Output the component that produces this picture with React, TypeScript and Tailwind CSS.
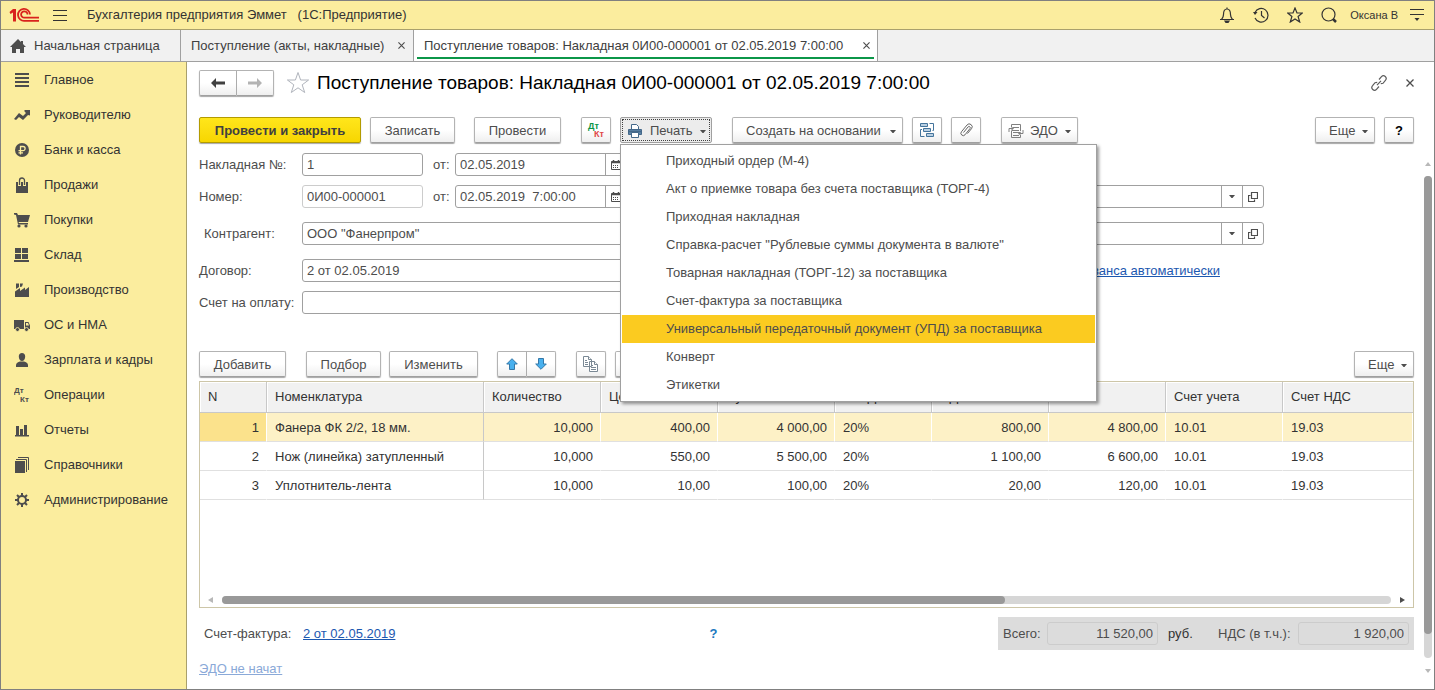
import type { ReactNode } from 'react';
import clsx from 'clsx';

interface IconProps {
    className?: string;
}

const sections: { name: string; icon: ReactNode }[] = [
    { name: 'Главное', icon: <path d="M1 1h14v2H1zM1 5h14v2H1zM1 9h14v2H1zM1 13h14v2H1z" /> },
    {
        name: 'Руководителю',
        icon: <path d="M0 12l5-6 4 3 3-3-1.500-1.500V3H16v5.500L14 8l-5 5-4-3-3 3z" />,
    },
    {
        name: 'Банк и касса',
        icon: (
            <>
                <circle cx="8" cy="8" r="7" />
                <path
                    d="M6.500 12.500V4.500H9a2 2 0 0 1 0 4.200H4.500M4.500 10.800H9"
                    fill="none"
                    stroke="#fbed9e"
                    strokeWidth="1.300"
                />
            </>
        ),
    },
    {
        name: 'Продажи',
        icon: (
            <>
                <path d="M2 5h12v11H2z" />
                <path d="M5.500 9V3.500a2.500 2.500 0 0 1 5 0V9" fill="none" stroke="#fbed9e" strokeWidth="3" />
                <path d="M5.500 8V3.500a2.500 2.500 0 0 1 5 0V8" fill="none" stroke="#4d4d4d" strokeWidth="1.300" />
            </>
        ),
    },
    {
        name: 'Покупки',
        icon: (
            <>
                <path d="M0 1h3l1 2h12l-2 7H4.500L5 11h9v1.500H4L2 3 0 2.500z" />
                <circle cx="5" cy="14" r="1.600" />
                <circle cx="12" cy="14" r="1.600" />
            </>
        ),
    },
    {
        name: 'Склад',
        icon: <path d="M1 1h6v5H1zM8 1h6v5H8zM1 7h6v5H1zM8 7h6v5H8zM0 13h15v2H0z" />,
    },
    {
        name: 'Производство',
        icon: <path d="M1 15V9.500L6 6v3l5-3.500V8l4-3v10zM2 1.500h3V5L2 7zM6 1.500h3l-1 3-2 .5z" />,
    },
    {
        name: 'ОС и НМА',
        icon: (
            <>
                <path d="M0 3h10v9H0zM11 5h3.500L16 8.500V12h-5z" />
                <path d="M12 6h2l1 2.500h-3z" fill="#fbed9e" />
                <circle cx="3.500" cy="12.500" r="2" stroke="#fbed9e" strokeWidth=".8" />
                <circle cx="12.500" cy="12.500" r="2" stroke="#fbed9e" strokeWidth=".8" />
            </>
        ),
    },
    {
        name: 'Зарплата и кадры',
        icon: (
            <path d="M8 1c2 0 3.200 1.300 3.200 3.500C11.200 7 9.800 9 8 9S4.800 7 4.800 4.500C4.800 2.300 6 1 8 1zM2 15v-2c0-2 2-3 4-3.500h4c2 .5 4 1.500 4 3.500v2z" />
        ),
    },
    {
        name: 'Операции',
        icon: (
            <>
                <text x="0" y="6" fontSize="8" fontWeight="bold">
                    Дт
                </text>
                <text x="6" y="15" fontSize="8" fontWeight="bold">
                    Кт
                </text>
            </>
        ),
    },
    { name: 'Отчеты', icon: <path d="M2 4h3v9h1V7h3v6h1V3h3v10h2v1.500H1V13h1z" /> },
    {
        name: 'Справочники',
        icon: (
            <>
                <path d="M1 4h10v12H1z" />
                <path d="M2 2.500h10.500V15M4 .5h10.500V13" fill="none" stroke="#4d4d4d" />
            </>
        ),
    },
    {
        name: 'Администрирование',
        icon: (
            <>
                <circle cx="8" cy="8" r="4" fill="none" stroke="#4d4d4d" strokeWidth="2" />
                <path
                    d="M8 1v3M8 12v3M1 8h3M12 8h3M3 3l2 2M11 11l2 2M13 3l-2 2M5 11l-2 2"
                    stroke="#4d4d4d"
                    strokeWidth="2"
                />
            </>
        ),
    },
];

const printForms = [
    'Приходный ордер (М-4)',
    'Акт о приемке товара без счета поставщика (ТОРГ-4)',
    'Приходная накладная',
    'Справка-расчет "Рублевые суммы документа в валюте"',
    'Товарная накладная (ТОРГ-12) за поставщика',
    'Счет-фактура за поставщика',
    'Универсальный передаточный документ (УПД) за поставщика',
    'Конверт',
    'Этикетки',
];

const columns = [
    { title: 'N', width: 'w-[67px]', numeric: true },
    { title: 'Номенклатура', width: 'w-[217px]', numeric: false },
    { title: 'Количество', width: 'w-[117px]', numeric: true },
    { title: 'Цена', width: 'w-[117px]', numeric: true },
    { title: 'Сумма', width: 'w-[117px]', numeric: true },
    { title: '% НДС', width: 'w-[97px]', numeric: false },
    { title: 'НДС', width: 'w-[117px]', numeric: true },
    { title: 'Всего', width: 'w-[117px]', numeric: true },
    { title: 'Счет учета', width: 'w-[117px]', numeric: false },
    { title: 'Счет НДС', width: '', numeric: false },
];

const goods = [
    ['1', 'Фанера ФК 2/2, 18 мм.', '10,000', '400,00', '4 000,00', '20%', '800,00', '4 800,00', '10.01', '19.03'],
    ['2', 'Нож (линейка) затупленный', '10,000', '550,00', '5 500,00', '20%', '1 100,00', '6 600,00', '10.01', '19.03'],
    ['3', 'Уплотнитель-лента', '10,000', '10,00', '100,00', '20%', '20,00', '120,00', '10.01', '19.03'],
];

const Caret = ({ className }: IconProps) => (
    <svg viewBox="0 0 6 3" className={clsx('h-[3px] w-1.5 shrink-0', className)} fill="#4d4d4d">
        <path d="M0 0h6L3.500 3h-1z" />
    </svg>
);

const Cross = ({ className }: IconProps) => (
    <svg viewBox="0 0 8 8" className={clsx('shrink-0', className)} stroke="#4d4d4d" strokeWidth="1.300">
        <path d="M.5.5l7 7M7.500.5l-7 7" />
    </svg>
);

const DtKt = () => (
    <svg viewBox="0 0 18 18" className="h-[18px] w-[18px]" fontSize="9" fontWeight="bold">
        <text x="1" y="8" fill="#0b9648">
            Дт
        </text>
        <text x="7" y="16" fill="#e04848">
            Кт
        </text>
    </svg>
);

const CalendarIcon = () => (
    <svg viewBox="0 0 10 10" className="h-2.5 w-2.5" fill="none" stroke="#4d4d4d">
        <path d="M.5 1.500h9v8h-9z" />
        <path d="M0 2.500h10M2.500 0v2M7.500 0v2" strokeWidth="1.500" />
        <path d="M2 5.500h6M2 7.500h6" strokeDasharray="1 1" />
    </svg>
);

const OpenIcon = () => (
    <svg viewBox="0 0 10 10" className="h-2.5 w-2.5" fill="none" stroke="#4d4d4d" strokeWidth="1.200">
        <path d="M3.500.5h6v6h-6zM2.500 3.500h-2v6h6v-2" />
    </svg>
);

interface ButtonProps {
    children: ReactNode;
    className?: string;
    label?: string;
}

const Button = ({ children, className, label }: ButtonProps) => (
    <button
        type="button"
        aria-label={label}
        className={clsx(
            'flex h-[26px] shrink-0 items-center rounded-[2px] border border-[#b3b3b3] border-b-[#a0a0a0] bg-linear-to-b from-white from-50% to-[#efefef] shadow-[0_1px_1px_rgba(0,0,0,0.35)]',
            !label && 'pt-0.5',
            className
        )}
    >
        {children}
    </button>
);

interface FieldProps {
    id: string;
    label: string;
    value: string;
    kind?: 'plain' | 'readonly' | 'date' | 'reference';
    labelClass: string;
    boxClass: string;
}

const Field = ({ id, label, value, kind = 'plain', labelClass, boxClass }: FieldProps) => (
    <>
        <label htmlFor={id} className={clsx('shrink-0', labelClass)}>
            {label}
        </label>
        <div
            className={clsx(
                'flex h-[23px] rounded-[3px] border bg-white',
                kind === 'readonly' ? 'border-[#cccccc]' : 'border-[#a0a0a0]',
                boxClass
            )}
        >
            <input
                id={id}
                defaultValue={value}
                readOnly={kind === 'readonly'}
                className="w-full min-w-0 bg-transparent px-1 outline-none"
            />
            {kind === 'date' && (
                <button
                    type="button"
                    aria-label="Выбрать дату"
                    className="flex w-[21px] shrink-0 items-center justify-center border-l border-[#a0a0a0]"
                >
                    <CalendarIcon />
                </button>
            )}
            {kind === 'reference' && (
                <>
                    <button
                        type="button"
                        aria-label="Выбрать"
                        className="flex w-[21px] shrink-0 items-center justify-center border-l border-[#a0a0a0]"
                    >
                        <Caret />
                    </button>
                    <button
                        type="button"
                        aria-label="Открыть"
                        className="flex w-[21px] shrink-0 items-center justify-center border-l border-[#a0a0a0]"
                    >
                        <OpenIcon />
                    </button>
                </>
            )}
        </div>
    </>
);

const Header = () => (
    <header className="flex h-[29px] items-center border-b border-[#a9a06c] bg-[#fbed9e] text-[#333333]">
        <svg viewBox="0 0 30 16" className="ml-2 h-4 w-[30px]" fill="none" stroke="#d9231d" strokeWidth="1.800">
            <path d="M.5 5L4 2h3v12.500H4V5.500L1.500 7z" fill="#d9231d" stroke="none" />
            <path d="M21 7.500A6 6 0 1 0 15.500 13.800H30" />
            <path d="M18.500 7.500A3.200 3.200 0 1 0 15.500 10.700H30" />
        </svg>
        <button type="button" aria-label="Меню" className="ml-3.5">
            <svg viewBox="0 0 14 11" className="h-[11px] w-3.5" stroke="#333333">
                <path d="M0 .5h14M0 5.500h14M0 10.500h14" />
            </svg>
        </button>
        <h1 className="ml-5 flex-1 whitespace-pre">Бухгалтерия предприятия Эммет   (1С:Предприятие)</h1>
        <button type="button" aria-label="Уведомления" className="flex w-[34px] justify-center">
            <svg viewBox="0 0 16 16" className="h-4 w-4" fill="none" stroke="#333333" strokeWidth="1.200">
                <path d="M8 .5v1.500M1 12.500h14M2.500 12.500c1-1.500 2-2.500 2-5C4.500 4 5.500 2 8 2s3.500 2 3.500 5.500c0 2.500 1 3.500 2 5" />
                <path d="M6 14h4l-1 1.500H7z" fill="#333333" />
            </svg>
        </button>
        <button type="button" aria-label="История" className="flex w-[34px] justify-center">
            <svg viewBox="0 0 16 16" className="h-4 w-4" fill="none" stroke="#333333" strokeWidth="1.200">
                <path d="M2 5.500A6.800 6.800 0 1 1 2 11M8.500 4v4.500l3 2.500" />
                <path d="M0 5h4.500L2 8z" fill="#333333" stroke="none" />
            </svg>
        </button>
        <button type="button" aria-label="Избранное" className="flex w-[34px] justify-center">
            <svg viewBox="0 0 16 16" className="h-4 w-4" fill="none" stroke="#333333" strokeWidth="1.200">
                <path d="M8 1l2 5h5.300l-4.200 3.500 1.600 5.500L8 12l-4.700 3 1.600-5.500L.7 6H6z" />
            </svg>
        </button>
        <button type="button" aria-label="Поиск" className="flex w-[34px] justify-center">
            <svg viewBox="0 0 16 16" className="h-4 w-4" fill="none" stroke="#333333" strokeWidth="1.200">
                <circle cx="7.500" cy="7.500" r="6.500" />
                <path d="M12 12l3 3" strokeWidth="2.500" />
            </svg>
        </button>
        <span className="ml-1 text-[11px]">Оксана В</span>
        <button type="button" aria-label="Настройки" className="mr-2.5 ml-3">
            <svg viewBox="0 0 14 14" className="h-3.5 w-3.5" stroke="#333333">
                <path d="M0 1.500h14M0 6.500h14" />
                <path d="M4.500 10h5L7 13z" fill="#333333" stroke="none" />
            </svg>
        </button>
    </header>
);

const Tabs = () => (
    <nav className="flex h-8 border-b border-[#a0a0a0] bg-[#f1f1f1] text-[#404040]">
        <a href="#home" className="flex w-[180px] items-center gap-2 border-r border-[#a0a0a0] pl-[9px]">
            <svg viewBox="0 0 16 16" className="h-4 w-4" fill="#4d4d4d">
                <path d="M8 1l3 3V3h2v3l3 3h-2v6h-4v-4H6v4H2V9H0z" />
            </svg>
            Начальная страница
        </a>
        <div className="flex w-[233px] items-center justify-between border-r border-[#a0a0a0] pr-2 pl-2.5">
            <a href="#list">Поступление (акты, накладные)</a>
            <button type="button" aria-label="Закрыть вкладку">
                <Cross className="h-[7px] w-[7px]" />
            </button>
        </div>
        <div className="flex w-[464px] flex-col border-r border-[#a0a0a0] bg-white px-[3px] pb-0.5">
            <div className="flex flex-1 items-center justify-between border-b-2 border-[#0b9648] pt-1 pr-1 pl-[7px]">
                <a href="#document">Поступление товаров: Накладная 0И00-000001 от 02.05.2019 7:00:00</a>
                <button type="button" aria-label="Закрыть вкладку">
                    <Cross className="h-[7px] w-[7px]" />
                </button>
            </div>
        </div>
    </nav>
);

const Sidebar = () => (
    <aside className="w-[186px] shrink-0 border-r border-[#a9a06c] bg-[#fbed9e] text-[#333333]">
        {sections.map((section) => (
            <a key={section.name} href="#section" className="flex h-[35px] items-center gap-3.5 pl-[13px]">
                <svg viewBox="0 0 16 16" className="h-4 w-4 shrink-0" fill="#4d4d4d">
                    {section.icon}
                </svg>
                {section.name}
            </a>
        ))}
    </aside>
);

const PrintMenu = () => (
    <ul
        role="menu"
        className="absolute top-[27px] left-0 z-10 w-[477px] border border-[#a0a0a0] bg-white px-px py-0.5 shadow-[2px_2px_3px_rgba(0,0,0,0.4)]"
    >
        {printForms.map((form) => (
            <li key={form} role="none">
                <button
                    type="button"
                    role="menuitem"
                    className={clsx(
                        'flex h-7 w-full items-center pl-11 text-left',
                        form.startsWith('Универсальный') && 'bg-[#fbcb20]'
                    )}
                >
                    {form}
                </button>
            </li>
        ))}
    </ul>
);

const CommandBar = () => (
    <div className="mt-[21px] flex items-start">
        <button
            type="button"
            className="h-[26px] w-[162px] shrink-0 rounded-[2px] border border-[#b39b00] bg-linear-to-b from-[#ffe61a] to-[#f7d600] pt-0.5 font-bold text-[#404040] shadow-[0_1px_1px_rgba(0,0,0,0.35)]"
        >
            Провести и закрыть
        </button>
        <Button className="ml-[9px] w-[85px] justify-center">Записать</Button>
        <Button className="ml-[19px] w-[87px] justify-center">Провести</Button>
        <Button className="ml-5 w-[30px] justify-center" label="Показать проводки">
            <DtKt />
        </Button>
        <div className="relative ml-[9px]">
            <button
                type="button"
                aria-haspopup="menu"
                aria-expanded="true"
                className="flex h-[26px] w-[92px] rounded-[2px] border border-[#a0a0a0] bg-[#ececec] p-px"
            >
                <span className="flex h-full w-full items-center border border-dotted border-[#404040] pt-0.5 pr-[3px] pl-[5px]">
                    <svg viewBox="0 0 14 14" className="h-3.5 w-3.5" fill="none" stroke="#44688a">
                        <path d="M3.500 5V.5h5l2 2V5" fill="#fff" />
                        <path d="M.5 5.500h13v5H.5z" fill="#5c84a8" />
                        <path d="M3.500 8.500h7v5h-7z" fill="#fff" />
                        <path d="M0 7.500h14" strokeWidth="1.500" />
                    </svg>
                    <span className="ml-2 flex-1 text-left">Печать</span>
                    <Caret />
                </span>
            </button>
            <PrintMenu />
        </div>
        <Button className="ml-5 w-[171px] justify-between pr-1.5 pl-[13px]">
            Создать на основании
            <Caret />
        </Button>
        <Button className="ml-[9px] w-[30px] justify-center" label="Структура подчиненности">
            <svg viewBox="0 0 16 16" className="h-4 w-4" fill="#b8cfe2" stroke="#44749c">
                <path d="M1.500 1.500h7v3h-7zM4.500 6.500h7v3h-7zM7.500 11.500h7v3h-7z" />
                <path d="M10.500 1.500h4v7h-1M3 7.500H1.500v7h4" fill="none" />
            </svg>
        </Button>
        <Button className="ml-[9px] w-[30px] justify-center" label="Присоединенные файлы">
            <svg viewBox="0 0 16 16" className="h-4 w-4" fill="none" stroke="#666666">
                <path d="M5.500 10.500l4.500-5.500a1.200 1.200 0 0 1 2 1.500L7 12.800A2.300 2.300 0 0 1 3.500 9.700L9 3a2.900 2.900 0 0 1 4.500 3.700L9.500 11.500" />
            </svg>
        </Button>
        <Button className="ml-5 w-[77px] pr-1.5 pl-1.5">
            <svg viewBox="0 0 16 16" className="h-4 w-4" fill="none" stroke="#808080">
                <path d="M3.500 4V1.500h9V8M3.500 8v6.500h9V12M5 4.500h6M3.500 7.500H11M5 9.500h7.500M5 12.500h6" />
                <path d="M1 9V5.500h3M15 7v3.500h-3" />
                <path d="M3.500 3.500v4l2.500-2zM12.500 8.500v4l-2.500-2z" fill="#808080" stroke="none" />
            </svg>
            <span className="ml-1.5 flex-1 text-left">ЭДО</span>
            <Caret />
        </Button>
        <Button className="ml-auto w-[60px] justify-between pr-1.5 pl-[13px]">
            Еще
            <Caret />
        </Button>
        <Button className="ml-[9px] w-[30px] justify-center font-bold text-black">?</Button>
    </div>
);

const DocumentForm = () => (
    <div className="mt-2.5 flex flex-col">
        <div className="flex items-center">
            <Field id="invoice" label="Накладная №:" value="1" labelClass="w-[103px]" boxClass="w-[121px]" />
            <Field
                id="invoice-date"
                label="от:"
                value="02.05.2019"
                kind="date"
                labelClass="ml-2.5 w-[22px]"
                boxClass="w-[172px]"
            />
        </div>
        <div className="mt-[9px] flex items-center">
            <Field
                id="number"
                label="Номер:"
                value="0И00-000001"
                kind="readonly"
                labelClass="w-[103px]"
                boxClass="w-[121px]"
            />
            <Field
                id="number-date"
                label="от:"
                value="02.05.2019  7:00:00"
                kind="date"
                labelClass="ml-2.5 w-[22px]"
                boxClass="w-[172px]"
            />
            <div className="ml-[380px] flex w-[257px] items-center">
                <Field
                    id="organization"
                    label="Фирма:"
                    value=""
                    kind="reference"
                    labelClass="w-20"
                    boxClass="flex-1"
                />
            </div>
        </div>
        <div className="mt-3.5 flex items-center">
            <div className="flex w-[561px] items-center">
                <Field
                    id="contractor"
                    label="Контрагент:"
                    value={'ООО "Фанерпром"'}
                    kind="reference"
                    labelClass="w-[103px] pl-[5px]"
                    boxClass="flex-1"
                />
            </div>
            <div className="ml-[247px] flex w-[257px] items-center">
                <Field
                    id="warehouse"
                    label="Склад:"
                    value=""
                    kind="reference"
                    labelClass="w-20"
                    boxClass="flex-1"
                />
            </div>
        </div>
        <div className="mt-3.5 flex items-center">
            <div className="flex w-[561px] items-center">
                <Field
                    id="contract"
                    label="Договор:"
                    value="2 от 02.05.2019"
                    kind="reference"
                    labelClass="w-[103px]"
                    boxClass="flex-1"
                />
            </div>
            <div className="ml-5 flex w-[440px] justify-end">
                <a href="#settlements" className="text-[#1c58b0] underline">
                    зачет аванса автоматически
                </a>
            </div>
        </div>
        <div className="mt-[9px] flex w-[561px] items-center">
            <Field
                id="bill"
                label="Счет на оплату:"
                value=""
                kind="reference"
                labelClass="w-[103px]"
                boxClass="flex-1"
            />
        </div>
    </div>
);

const GoodsToolbar = () => (
    <div className="mt-[37px] flex">
        <Button className="w-[87px] justify-center">Добавить</Button>
        <Button className="ml-5 w-[75px] justify-center">Подбор</Button>
        <Button className="ml-2 w-[89px] justify-center">Изменить</Button>
        <Button className="ml-[19px] w-[30px] justify-center rounded-r-none" label="Переместить вверх">
            <svg viewBox="0 0 12 12" className="h-3 w-3" fill="#48b0ee" stroke="#3478a8">
                <path d="M6 .7l5.300 5.300h-2.800v5.500h-5V6H.7z" />
            </svg>
        </Button>
        <Button className="w-[29px] justify-center rounded-l-none border-l-0" label="Переместить вниз">
            <svg viewBox="0 0 12 12" className="h-3 w-3" fill="#48b0ee" stroke="#3478a8">
                <path d="M6 11.300L.7 6h2.800V.5h5V6h2.800z" />
            </svg>
        </Button>
        <Button className="ml-5 w-[30px] justify-center" label="Скопировать строки">
            <svg viewBox="0 0 16 16" className="h-4 w-4" fill="#fff" stroke="#7a8894">
                <path d="M.5.5h5l3 3v7h-8zM6.500 5.500h5l3 3v7h-8z" />
                <path d="M5.500.5v3h3M11.500 5.500v3h3M2 4.500h2M2 6.500h3M2 8.500h3M8 9.500h2M8 11.500h5M8 13.500h5" />
            </svg>
        </Button>
        <Button className="ml-[9px] w-[30px]" label="Вставить строки">
            {' '}
        </Button>
        <Button className="ml-auto w-[60px] justify-between pr-1.5 pl-[13px]">
            Еще
            <Caret />
        </Button>
    </div>
);

const GoodsTable = () => (
    <div className="mt-1 flex flex-1 flex-col border border-[#cdc6a8] text-[#333333]">
        <table className="w-full table-fixed border-separate border-spacing-0">
            <thead>
                <tr className="h-[31px]">
                    {columns.map((column) => (
                        <th
                            key={column.title}
                            className={clsx(
                                'border-r border-b border-[#c8c8c8] bg-[#f1f1f1] px-2 text-left font-normal shadow-[inset_1px_1px_0_white] last:border-r-0',
                                column.width
                            )}
                        >
                            {column.title}
                        </th>
                    ))}
                </tr>
            </thead>
            <tbody>
                {goods.map((row, rowIndex) => (
                    <tr key={row[0]} className={clsx('h-[29px]', rowIndex === 0 && 'bg-[#fdf1c6]')}>
                        {row.map((value, index) => (
                            <td
                                key={columns[index].title}
                                className={clsx(
                                    'border-b border-b-[#e0e0e0] pt-0.5',
                                    columns[index].numeric ? 'pr-[7px] pl-2 text-right' : 'px-2',
                                    index === 1 && 'border-r border-r-[#c8c8c8]',
                                    rowIndex === 0 && index !== 1 && 'border-r border-r-white',
                                    rowIndex > 0 && index !== 1 && 'border-r border-r-transparent',
                                    rowIndex === 0 && index === 0 && 'bg-[#fbe28c]'
                                )}
                            >
                                {value}
                            </td>
                        ))}
                    </tr>
                ))}
            </tbody>
        </table>
        <div className="mt-auto flex items-center px-2 pb-[3px]" aria-hidden="true">
            <svg viewBox="0 0 5 8" className="h-2 w-[5px]" fill="#b8b8b8">
                <path d="M5 1v6L0 4z" />
            </svg>
            <div className="mx-[9px] h-2 flex-1 rounded-full bg-[#d6d6d6]">
                <div className="h-2 w-[67%] rounded-full bg-[#999999]" />
            </div>
            <svg viewBox="0 0 5 8" className="h-2 w-[5px]" fill="#4d4d4d">
                <path d="M0 1v6l5-3z" />
            </svg>
        </div>
    </div>
);

const Totals = () => (
    <div className="mt-[9px] flex items-center">
        <span className="w-[104px] pl-[5px]">Счет-фактура:</span>
        <a href="#invoice" className="text-[#1c58b0] underline">
            2 от 02.05.2019
        </a>
        <button type="button" className="ml-[314px] font-bold text-[#1a78c0]">
            ?
        </button>
        <div className="ml-auto flex h-[33px] items-center bg-[#dcdcdc] px-[5px]">
            <label htmlFor="total" className="w-11">
                Всего:
            </label>
            <input
                id="total"
                readOnly
                value="11 520,00"
                className="h-[23px] w-[111px] rounded-[3px] border border-[#cccccc] px-1 text-right"
            />
            <span className="ml-2.5 w-[50px] text-[#333333]">руб.</span>
            <label htmlFor="vat" className="w-20">
                НДС (в т.ч.):
            </label>
            <input
                id="vat"
                readOnly
                value="1 920,00"
                className="h-[23px] w-[111px] rounded-[3px] border border-[#cccccc] px-1 text-right"
            />
        </div>
    </div>
);

const PageScroll = () => (
    <div className="mt-[98px] mr-0.5 mb-4 flex w-[9px] flex-col items-center" aria-hidden="true">
        <svg viewBox="0 0 6 4" className="mt-0.5 h-1 w-1.5" fill="#b8b8b8">
            <path d="M3 0l3 4H0z" />
        </svg>
        <div className="mt-2.5 mb-[11px] w-2 flex-1 rounded-full bg-[#d6d6d6]">
            <div className="h-[95%] rounded-full bg-[#999999]" />
        </div>
        <svg viewBox="0 0 6 4" className="h-1 w-1.5" fill="#b8b8b8">
            <path d="M0 0h6L3 4z" />
        </svg>
    </div>
);

const App = () => (
    <div className="flex min-h-screen flex-col border border-[#808080] bg-white font-['Liberation_Sans',Arial,sans-serif] text-[13px] leading-4 text-[#4d4d4d]">
        <Header />
        <Tabs />
        <div className="flex flex-1">
            <Sidebar />
            <main className="flex min-w-0 flex-1 flex-col pt-2 pr-[9px] pb-3 pl-3">
                <div className="flex h-[26px] items-center">
                    <Button className="w-[38px] justify-center rounded-r-none" label="Назад">
                        <svg viewBox="0 0 14 10" className="h-2.5 w-3.5" fill="#404040">
                            <path d="M0 5l5-5v3.500h9v3H5V10z" />
                        </svg>
                    </Button>
                    <Button className="w-[37px] justify-center rounded-l-none border-l-0" label="Вперед">
                        <svg viewBox="0 0 14 10" className="h-2.5 w-3.5" fill="#b3b3b3">
                            <path d="M14 5L9 0v3.500H0v3h9V10z" />
                        </svg>
                    </Button>
                    <button type="button" aria-label="В избранное" className="ml-3">
                        <svg viewBox="0 0 24 24" className="h-6 w-6" fill="none" stroke="#b0b4bc">
                            <path d="M12 1.500l2.600 7.500h8L16.200 13.800l2.500 7.700L12 16.800l-6.700 4.700 2.500-7.700L1.400 9h8z" />
                        </svg>
                    </button>
                    <h2 className="ml-[7px] flex-1 text-[19px] leading-6 text-black">
                        Поступление товаров: Накладная 0И00-000001 от 02.05.2019 7:00:00
                    </h2>
                    <button type="button" aria-label="Получить ссылку" className="mr-[15px]">
                        <svg viewBox="0 0 16 16" className="h-4 w-4" fill="none" stroke="#5c5c5c" strokeWidth="1.200">
                            <path d="M8 4.500l2.500-2.800a2.600 2.600 0 0 1 3.900 3.600L12 8.300l-2.200.4" />
                            <path d="M8 11.500l-2.500 2.800a2.600 2.600 0 0 1-3.900-3.600L4 7.700l2.200-.4M6 10.200l4-4.400" />
                        </svg>
                    </button>
                    <button type="button" aria-label="Закрыть" className="-mr-1 p-1">
                        <Cross className="h-2 w-2" />
                    </button>
                </div>
                <CommandBar />
                <DocumentForm />
                <GoodsToolbar />
                <GoodsTable />
                <Totals />
                <div className="mt-[11px]">
                    <a href="#edo" className="text-[#8aa9d8] underline">
                        ЭДО не начат
                    </a>
                </div>
            </main>
            <PageScroll />
        </div>
    </div>
);

export default App;
